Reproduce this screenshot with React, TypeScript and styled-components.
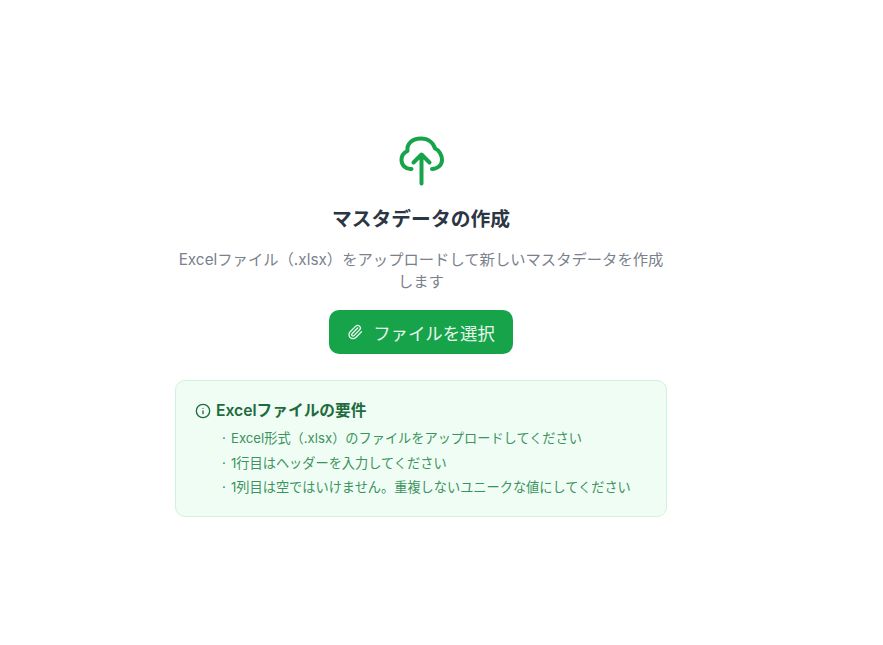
import { createGlobalStyle } from "styled-components";
import styled from "styled-components";
import { Info, Paperclip } from "lucide-react";

const GlobalStyle = createGlobalStyle`
  html, body {
    margin: 0;
    padding: 0;
    background: #ffffff;
  }
  body {
    font-family: Inter, "Noto Sans CJK JP", sans-serif;
  }
`;

const Page = styled.div`
  width: 883px;
  height: 645px;
  box-sizing: border-box;
  padding: 135px 41px 0 0;
  display: flex;
  justify-content: center;
  overflow: hidden;
`;

const Column = styled.div`
  width: 492px;
  display: flex;
  flex-direction: column;
  align-items: center;
`;

const CloudIcon = styled.svg`
  display: block;
  width: 48px;
  height: 52px;
  color: #16a34a;
`;

const Title = styled.h2`
  margin: 18px 0 0;
  font-size: 19.8px;
  line-height: 28px;
  font-weight: 600;
  color: #2b3544;
  text-align: center;
`;

const Description = styled.p`
  margin: 16px 0 0;
  width: 492px;
  font-size: 15.3px;
  line-height: 22px;
  letter-spacing: 0.02px;
  color: #7a818d;
  text-align: center;
`;

const SelectButton = styled.button`
  margin-top: 17px;
  height: 44px;
  padding: 0 18px;
  display: flex;
  align-items: center;
  gap: 10px;
  border: none;
  border-radius: 10px;
  background: #16a34a;
  color: #e8f6ed;
  font-family: inherit;
  font-size: 17.4px;
  font-weight: 400;
  cursor: pointer;
`;

const Requirements = styled.div`
  margin-top: 26px;
  width: 100%;
  box-sizing: border-box;
  height: 137px;
  padding: 20px 19px;
  background: #f0fdf4;
  border: 1px solid #cdf5da;
  border-radius: 10px;
`;

const RequirementsTitle = styled.div`
  display: flex;
  align-items: center;
  gap: 5px;
  font-size: 15.7px;
  line-height: 20px;
  font-weight: 600;
  color: #1f6b3d;
`;

const RequirementsList = styled.ul`
  list-style: none;
  margin: 5px 0 0;
  padding: 0 0 0 25px;
`;

const RequirementsItem = styled.li`
  display: flex;
  font-size: 13.2px;
  line-height: 24.5px;
  color: #3b9360;

  &::before {
    content: "·";
    width: 9px;
    padding-left: 2px;
    flex-shrink: 0;
  }
`;

const requirements = [
  "Excel形式（.xlsx）のファイルをアップロードしてください",
  "1行目はヘッダーを入力してください",
  "1列目は空ではいけません。重複しないユニークな値にしてください",
];

const App = () => {
  return (
    <Page>
      <GlobalStyle />
      <Column>
        <CloudIcon viewBox="0 0 48 52" fill="none" stroke="currentColor" strokeWidth="4" strokeLinecap="round" strokeLinejoin="round">
          <path d="M14.5 34C8.5 34.5 4.5 30 4.5 25C4.5 20.5 7 17.5 10.5 16C9.5 9 15 3.5 24 3.5C31 3.5 36.5 7.5 38 13.5C42 15 45 20 45 25C45 30 40.5 34 35 34" />
          <path d="M24.5 48.5V19.5M16.5 27.5L24.5 19.5L32.5 27.5" />
        </CloudIcon>
        <Title>マスタデータの作成</Title>
        <Description>Excelファイル（.xlsx）をアップロードして新しいマスタデータを作成します</Description>
        <SelectButton>
          <Paperclip size={16} strokeWidth={2} />
          ファイルを選択
        </SelectButton>
        <Requirements>
          <RequirementsTitle>
            <Info size={16} strokeWidth={2} />
            Excelファイルの要件
          </RequirementsTitle>
          <RequirementsList>
            {requirements.map((item) => (
              <RequirementsItem key={item}>{item}</RequirementsItem>
            ))}
          </RequirementsList>
        </Requirements>
      </Column>
    </Page>
  );
};

export default App;
